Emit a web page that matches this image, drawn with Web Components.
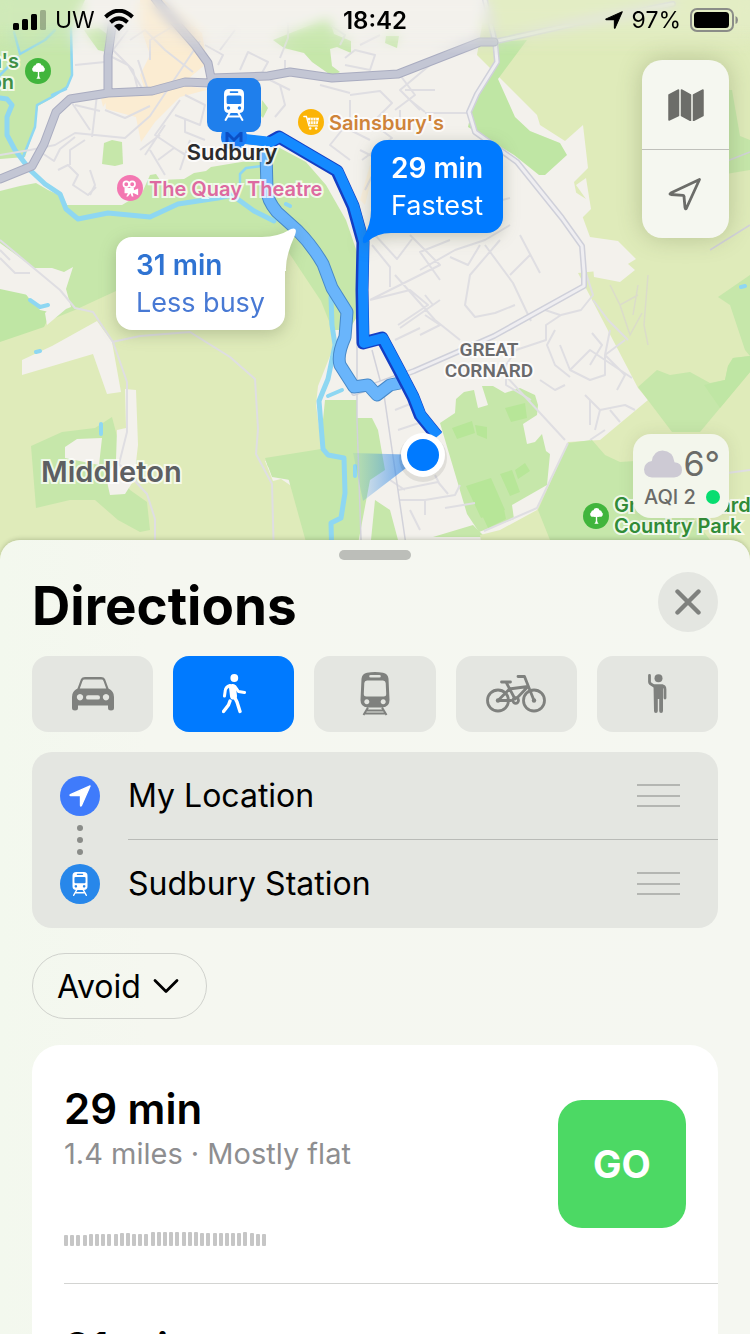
<!DOCTYPE html>
<html lang="en">
<head>
<meta charset="utf-8">
<meta name="viewport" content="width=device-width, initial-scale=1">
<title>Directions</title>
<style>
  :root {
    --blue: #007aff;
    --green: #4cd964;
    --grey: #7f817e;
    --sheet: #f5f7f0;
    --fill: #e4e6e1;
  }
  body { margin: 0; font-family: Inter, 'Liberation Sans', sans-serif; color: #000; }
</style>
</head>
<body>
<maps-app>
  <map-view slot="map">
    <map-label x="19" y="72" color="#3f8f45" anchor="end">n's<br>on</map-label>
    <map-poi x="38" y="71" icon="tree" color="#41b53c"></map-poi>
    <map-poi x="311" y="122" icon="cart" color="#fbb406"></map-poi>
    <map-label x="329" y="123" color="#cf8439">Sainsbury's</map-label>
    <map-poi x="130" y="188" icon="film" color="#f377b1"></map-poi>
    <map-label x="149" y="189" color="#dd6aa0">The Quay Theatre</map-label>
    <map-label x="232" y="152" color="#2b2b2d" size="22" anchor="middle">Sudbury</map-label>
    <map-label x="41" y="471" color="#5d5f62" size="29">Middleton</map-label>
    <map-label x="489" y="360" color="#6a6a6c" size="19" anchor="middle" face="Roboto">GREAT<br>CORNARD</map-label>
    <map-poi x="596" y="516" icon="tree" color="#41b53c"></map-poi>
    <map-label x="614" y="516" color="#318c38">Great Cornard<br>Country Park</map-label>
    <map-callout class="fast" tail="bottom" heading="29 min">Fastest</map-callout>
    <map-callout class="quiet" tail="top" heading="31 min">Less busy</map-callout>
  </map-view>
  <status-bar slot="status" carrier="UW" time="18:42" battery="97%"></status-bar>
  <map-controls slot="controls"></map-controls>
  <weather-chip slot="weather" temp="6°">AQI 2</weather-chip>
  <directions-sheet heading="Directions">
    <transport-tabs slot="modes"></transport-tabs>
    <stop-list slot="stops">
      <stop-row icon="arrow" color="#3f7bfb">My Location</stop-row>
      <stop-row icon="train" color="#2787ea">Sudbury Station</stop-row>
    </stop-list>
    <menu-pill slot="options">Avoid</menu-pill>
    <route-row heading="29 min" bars="222233333443335555555544444445433">1.4 miles · Mostly flat</route-row>
    <route-row heading="31 min" bars="222233334444333333333444333333222">1.5 miles · Mostly flat</route-row>
  </directions-sheet>
</maps-app>

<script>
const ICONS = {
  train: ['0 0 24 32', `<path fill="currentColor" fill-rule="evenodd" d="M7 0h10q5 0 5 5v14q0 5-5 5H7q-5 0-5-5V5q0-5 5-5zM8.500 2.200q-.8 0-.8.9t.8.9h7q.8 0 .8-.9t-.8-.9zM6 6.500q-1.400 0-1.400 1.500v5.500q0 1.500 1.400 1.500h12q1.400 0 1.400-1.500V8q0-1.500-1.400-1.500zM6.500 17.300a1.700 1.700 0 1 0 .01 0zM17.500 17.300a1.700 1.700 0 1 0 .01 0z"/><path d="M7.500 24 3.600 31M16.500 24l3.900 7M6 27.500h12" fill="none" stroke="currentColor" stroke-width="2" stroke-linecap="round"/>`],
  tram: ['0 0 30 44', `<path fill="currentColor" fill-rule="evenodd" d="M7 .8Q15-.8 23 .8q5 1 5.500 6L29.500 28q0 7-7 7.500H7.500q-7-.5-7-7.500L1.500 6.800q.5-5 5.500-6zM10.500 3q-1.300 0-1.300 1.200t1.300 1.200h9q1.300 0 1.300-1.200T19.500 3zM7 8.500q-2.500 0-2.700 2.500L3.800 22q0 2.500 2.500 2.500h17.400q2.500 0 2.500-2.500l-.5-11Q25.500 8.500 23 8.500zM6.800 27.200a2.500 2.500 0 1 0 .01 0zM23.200 27.200a2.500 2.500 0 1 0 .01 0z"/><path d="M8 35.500 3.500 43M22 35.500l4.500 7.500M6 38.500h18M4.500 41.500h21" fill="none" stroke="currentColor" stroke-width="2"/>`],
  car: ['0 0 42 34', `<path fill="currentColor" fill-rule="evenodd" d="M9 2Q10 0 13 0h16q3 0 4 2l3.500 9.500Q42 14 42 20v11q0 2.500-3 2.500t-3-2.500v-2.500H6V31q0 2.500-3 2.500T0 31V20q0-6 5.500-8.500zM12.500 2.600q-1.500 0-2 1.400L7.800 11.500h26.400L31.500 4q-.5-1.400-2-1.400zM8 17a3.200 3.200 0 1 0 .01 0zM34 17a3.200 3.200 0 1 0 .01 0zM16 18.200q-2 0-2 2.200t2 2.200h10q2 0 2-2.200t-2-2.200z"/>`],
  walk: ['0 0 24 40', `<circle cx="12.300" cy="4" r="3.900" fill="currentColor"/><g fill="none" stroke="currentColor" stroke-linecap="round" stroke-linejoin="round"><path d="M10.500 13.500 11.500 22" stroke-width="7"/><path d="M8 11.500Q3.500 13 3.200 17L2.500 22M13 12.500l3.500 5 6 1" stroke-width="3"/><path d="M12 22l3 6 3 9.500M8 27l-1.500 4-5 6.500" stroke-width="3.400"/></g>`],
  bike: ['0 0 60 38', `<g fill="none" stroke="currentColor" stroke-width="2.800" stroke-linecap="round" stroke-linejoin="round"><circle cx="12" cy="25.500" r="10.500"/><circle cx="48" cy="25.500" r="10.500"/><path d="M15.500 7h9M20 7l9 17M32 1.500h6.500L48 25.500M23 14l19-2.500L31 23M12 25.500h13M12 25.500 23.500 14"/><circle cx="29.700" cy="25.500" r="2.800"/></g><circle cx="12" cy="25.500" r="2.200" fill="currentColor"/><circle cx="48" cy="25.500" r="2.200" fill="currentColor"/>`],
  hail: ['0 0 19 40', `<circle cx="10.500" cy="4.300" r="4" fill="currentColor"/><path d="M1.500 1.500v6.500q0 1 1 1.800L6 12h8q3 0 3 3.500V24" fill="none" stroke="currentColor" stroke-width="2.800" stroke-linecap="round" stroke-linejoin="round"/><path d="M5.500 10.600H15V37q0 2-1.900 2T11.200 37V25h-1.400v12q0 2-1.900 2T6 37z" fill="currentColor"/>`],
  map: ['0 0 36 32', `<path fill="currentColor" stroke="currentColor" stroke-width="1.500" stroke-linejoin="round" d="M1 6l9.500-5v25.500L1 31zM13.500 1l9 5v25.500l-9-5zM25.500 6 35 1v25.500l-9.500 5z"/>`],
  compass: ['0 0 36 34', `<path fill="none" stroke="currentColor" stroke-width="2.800" stroke-linejoin="round" d="M31.500 2.500 18.500 31q-1 2-1.500-.5L16 19.500q0-1-1-1.200L3 17.500q-2-.4-.2-1.400z"/>`],
  arrow: ['0 0 24 24', `<path fill="currentColor" stroke="currentColor" stroke-width="1.400" stroke-linejoin="round" d="M23 1 13.500 22.500q-.8 1-1-.3V12.400q0-.9-.9-.9H1.800q-1.300-.2-.3-1z"/>`],
  tree: ['0 0 16 20', `<path fill="currentColor" d="M8 0q3 0 3.600 2.500Q14 2.500 14.300 5 16.500 6.500 15 9q-1.500 2-4 1.200-1.400.8-2.200.2V15q0 2 1.700 3.500h-5Q7.200 17 7.200 15v-4.600q-.8.6-2.200-.2-2.500.8-4-1.200Q-.5 6.500 1.700 5 2 2.500 4.400 2.500 5 0 8 0z"/>`],
  cart: ['0 0 20 20', `<path d="M1 3h3l3 11h10" fill="none" stroke="currentColor" stroke-width="1.600" stroke-linecap="round"/><path d="M5 4.500h14l-1.800 7.500H7z" fill="currentColor"/><path d="M9 5v7M12 5v7M15 5v7M6 8h12" stroke="#fbb406" stroke-width=".8"/><circle cx="8.500" cy="17" r="1.500" fill="currentColor"/><circle cx="15.500" cy="17" r="1.500" fill="currentColor"/>`],
  film: ['0 0 20 20', `<circle cx="5" cy="5" r="3.300" fill="none" stroke="currentColor" stroke-width="2"/><circle cx="12" cy="5" r="3.300" fill="none" stroke="currentColor" stroke-width="2"/><path fill="currentColor" d="M3 9.500h11V12l5-2v8l-5-2.500h-1.500l1 4h-2l-1.500-4-3 4H5l2-4H3z"/>`],
  close: ['0 0 26 26', `<path d="M2.500 2.500l21 21M23.500 2.500l-21 21" stroke="currentColor" stroke-width="4.400" stroke-linecap="round"/>`],
  chevron: ['0 0 26 16', `<path d="M2 2.500l11 11 11-11" fill="none" stroke="currentColor" stroke-width="2.800" stroke-linecap="round" stroke-linejoin="round"/>`],
  cloud: ['0 0 38 28', `<path fill="currentColor" d="M8 27.500h22q8-.5 8-7.500t-7.500-7.800Q29 1 18.500.5 9.500.8 7.800 11 .2 12.500 0 19.500q.3 7.500 8 8z"/>`],
  wifi: ['0 0 30 22', `<g fill="none" stroke="currentColor" stroke-width="4"><path d="M1.500 8Q15-4.500 28.500 8"/><path d="M6.500 13.200Q15 5.500 23.500 13.200"/></g><path fill="currentColor" d="M10 17q5-4.500 10 0l-5 5z"/>`]
};

const icon = (name, width, height) =>
  `<svg class="icon" viewBox="${ICONS[name][0]}" width="${width}" height="${height}" aria-hidden="true">${ICONS[name][1]}</svg>`;

// Small base class: render() returns the markup of the shadow root.
class BaseElement extends HTMLElement {
  connectedCallback() {
    if (this.shadowRoot) return;
    const root = this.attachShadow({ mode: 'open' });
    const template = document.createElement('template');
    template.innerHTML = this.render();
    root.appendChild(template.content.cloneNode(true));
  }
}

customElements.define('maps-app', class extends BaseElement {
  render() {
    return `
<style>
  :host { display: flex; flex-direction: column; height: 100vh; overflow: hidden; background: var(--sheet); }
  .stage { position: relative; flex: 0 0 560px; }
  .haze { position: absolute; inset: 0 0 auto; height: 56px; backdrop-filter: blur(6px); background: rgba(245,245,240,0.2); -webkit-mask-image: linear-gradient(#000 40%, transparent); mask-image: linear-gradient(#000 40%, transparent); }
  .status { position: absolute; inset: 0 0 auto; }
  .controls { position: absolute; top: 60px; right: 21px; }
  .weather { position: absolute; right: 21px; bottom: 42px; }
  .panel { position: relative; flex: 1 1 auto; min-height: 0; margin-top: -20px; display: flex; }
</style>
<div class="stage">
  <slot name="map"></slot>
  <div class="haze"></div>
  <div class="status"><slot name="status"></slot></div>
  <div class="controls"><slot name="controls"></slot></div>
  <div class="weather"><slot name="weather"></slot></div>
</div>
<div class="panel"><slot></slot></div>`;
  }
});

customElements.define('status-bar', class extends BaseElement {
  render() {
    return `
<style>
  :host { display: grid; grid-template-columns: 1fr auto 1fr; align-items: center; height: 40px; padding: 0 12px; font-size: 23px; }
  .side { display: flex; align-items: center; gap: 9px; }
  .right { justify-content: flex-end; }
  .time { font-size: 24px; font-weight: 600; }
  svg { display: block; }
</style>
<div class="side">
  <svg width="34" height="20" viewBox="0 0 34 20" aria-hidden="true">
    <rect x="1" y="13" width="6" height="7" rx="1.500"/><rect x="10" y="9" width="6" height="11" rx="1.500"/>
    <rect x="19" y="4" width="6" height="16" rx="1.500"/><rect x="28" y="0" width="6" height="20" rx="1.500" opacity=".25"/>
  </svg>
  <span>${this.getAttribute('carrier')}</span>
  ${icon('wifi', 30, 22)}
</div>
<div class="time">${this.getAttribute('time')}</div>
<div class="side right">
  ${icon('arrow', 18, 18)}
  <span>${this.getAttribute('battery')}</span>
  <svg width="48" height="24" viewBox="0 0 48 24" aria-hidden="true">
    <rect x="1" y="1" width="42" height="22" rx="6" fill="none" stroke="#8b8d88" stroke-width="2"/>
    <rect x="4" y="4" width="35" height="16" rx="3.500"/><path d="M45.500 8q2.500 1 2.500 4t-2.500 4z" fill="#8b8d88"/>
  </svg>
</div>`;
  }
});

customElements.define('map-view', class extends BaseElement {
  render() {
    const lane = 'M495 40l2 22-20 32-8 18 6 20 42 30 45 56 20 28 2 26 0 14-90 50-80 35-60 22M495 42l-10-42M493 42l90-20 90-18';
    const main = 'M0 179l32-13 12-22 12-32 14-13 38-6 44-2 33-9 25 1 2-5 56-2 22-4 42 6 66-4 82-32h14M108 92l0-36 4-30M145-15l15 20 35 40 13 18 4 20';
    const slow = 'M266 152l1 38q0 10 10 22l20 18q15 15 26 34l9 24 15 24-2 25q-8 18-5 28l14 22 14-2 9 10 13-10 10-2';
    const fast = 'l9-5 58 34 16 35 10 36-1 48 1 53 19-5 17 32 14 27 7 18 17 21';
    return `
<style>
  :host { display: block; position: relative; height: 560px; overflow: hidden; background: #f3f1ec; }
  .base { display: block; width: 100%; height: 100%; }
  .pin { position: absolute; left: calc(100% * 234 / 750); top: 105px; width: 54px; height: 54px; margin: -27px 0 0 -27px; border-radius: 10px; background: #1f7fec; color: #fff; display: flex; align-items: center; justify-content: center; }
  ::slotted(.fast) { left: calc(100% * 371 / 750); top: 140px; --back: var(--blue); --ink: #fff; --sub: #fff; }
  ::slotted(.quiet) { left: calc(100% * 116 / 750); top: 237px; --back: #fff; --ink: #2f73d2; --sub: #4879d4; }
</style>
<svg class="base" viewBox="0 0 750 560" preserveAspectRatio="xMidYMid slice" aria-hidden="true">
  <defs>
    <linearGradient id="beam" x1="1" y1="0" x2="0" y2="0"><stop offset="0" stop-color="#1778ee" stop-opacity=".8"/><stop offset="1" stop-color="#3a92dd" stop-opacity=".08"/></linearGradient>
  </defs>
  <!-- town centre -->
  <g fill="#fbecd2">
    <path d="M140 0h24l38 33 5 30-24 20-75 16-5 8-3-13 45-4-5-15 10-20-10-30z"/>
    <path d="M105 98l80-12 25 3-30 8-25 25-14 20-5-25-30-8z"/>
    <path d="M375 165l-10 40-5-5 10-35z" opacity=".6"/>
  </g>
  <!-- parks and woods -->
  <g fill="#c6e7aa">
    <path d="M0 0h85L72 28l-1 47-4 13-15 10-14 8-4 24-9 27-25 2z"/>
    <path d="M0 191l20-5 16-3 12 7 15 7 4 8 55 0 20-12 8-18 6-1 4 6 24-1 10-6 12-2 5-4 24-4 25-4 18-12 28 15 20 23 20 35 12 35 6 50-15 25H100L0 345V287l20 2 8 12 13 9 10-3-1-12-18-15-32-24z"/>
    <path d="M84 30l15-2 8 6-1 18-8-2-10-14z"/>
    <path d="M104 143l8-3 10 2 1 22-8 2-13-2z"/>
    <path d="M273 40l40-16 16-6 5 16 17 7 0 12-14-6-7 2 2 17 8 6-8 4-20-14-8-9-20-5z"/>
    <path d="M262 100l6 8-5 10-2-2zM386 36l13 0-2 12-12-5z"/>
    <path d="M325 400h32v18h15l6 12 7 40-15 10-15 80h-55l-10-80-18-3-7-19 55-9z"/>
    <path d="M375 500l15 10 8 30 0 10h-28zM385 537h100l-12-12-40 12z"/>
    <path d="M440 423l15-10 1-14 8-7 10-2 4 18 10-3-6-19 11 0 12 7 15-5 15 7 3 10-1 10-14 9 4 20 8-2 7-8 4 17 4 3-3 31-35 20 2 14-35 13-12-18z"/>
  </g>
  <!-- farmland -->
  <g fill="#dfebba">
    <path d="M0 340l45-18 30-12 15-7 26-12 60-50 30 0 40 15 35-15 40 60 8 20 5 25-16 40-2 19 6 45-57 11 8 20 8-2 18 12 12 69H0z"/>
    <path d="M550 0h200v560H484l-4-25 20-5 37-20 31-68 32-2 48-40-10-12-60-115 20-2 25-4 13-8-18-18-28-4-11-30-5-25 14-14-5-43-18 16-25-16-3-10-60-60 10-60-12-2z"/>
  </g>
  <g fill="#c6e7aa">
    <path d="M31 446l31-14 33-4 17-11 6 23 2 35 10 15 17 12 3 28-10 2-22-12-23-20-25 0-34 8z"/>
    <path d="M568 443l24-3 13 15 15 7 30-2 60 80 0 20H558l-20-50zM638 387l19-17 13 5 20-3 20 11 15-3 3-14 5-8 17-2v16l-30 36-20 24H672z"/>
    <path d="M750 275l-32 22 12 8 15 45 5 6zM716 90l16 0 8 46 10 4v30l-30 5z"/>
    <path d="M265 458l56-9 24 9-1 60-14 2 1 40h-20l-25-90-18-3z"/>
  </g>
  <g fill="#bfe6a4">
    <path d="M498 42l29-2-29 39 17 38 15 14 30 12 7 12-22 20-6 0-25-20-46-28 7-32 24-33z"/>
    <path d="M0 287l22 2 9 12 13 8 6 6-6 12-44 15zM704 385l21-5 3-14 5-8 17-2v16l-30 36z"/>
  </g>
  <g fill="#b7e698">
    <path d="M452 428l20-7 3 12-18 6zM505 408l20-5 2 15-16 4zM475 425l12 2 0 12-10-4zM466 486l25-8 14 32-24 8zM500 474l12-4 8 22-10 4zM515 470l10-7 5 8-12 8zM482 515l22-6 2 10-18 9z"/>
  </g>
  <!-- built-up patches in the fields -->
  <g fill="#f3f1ec">
    <path d="M0 243l34 25 8 0 10 0 12 4 9-5-7 22 5 18-5 2-19 16-2-12 9-8-5 7-9-2-12-15-28-6z"/>
    <path d="M22 360l30-14 45-25 15 21 9 50-14 2-14-40-71 21zM125 389l11 1 2 55-4 35-9 14-15 1-4-18 10-17 1-30 9-2zM65 447l12-8 25-1-3 27-34-7z"/>
    <path d="M550 176l36 23-10-14 10-7 5 31-14 14zM591 247l20 3 9 7 15 13-15 12-26-5z"/>
  </g>
  <g stroke="#dbdcca" stroke-width="1.500" fill="none"><path d="M610 285l10 20 18-10M620 305l10 30 12-22M638 285l-5 30M648 275l-4 50 4 20"/></g>
  <!-- water -->
  <g fill="none" stroke="#8ed7f2" stroke-linejoin="round" stroke-linecap="round">
    <path d="M0 98l7 1 5 6-5 12 0 18 8 15 15 20 15 14 15 10 6 15 12 10 30-6 42 4 28-13 40-6 14-3 22 16 20 10" stroke-width="5"/>
    <path d="M71 28l1 47-5 12-15 10-15 8-2 22-12 30M14 32l6 22 25-14 10-10M0 75l18-18M240 188l0-14 6-6 16-2M52 95l14-6" stroke-width="2.500"/>
    <path d="M331 297l1 28 3 20-7 34-9 22 4 48 5 6 16 3 1 35-4 25-10 5 1 37" stroke-width="5"/>
    <path d="M328 396l14-6M355 466l0 10" stroke-width="4"/>
    <path d="M30 300l10 7 8-2M36 352l4-1M101 424l0 10M286 204l4 2M741 287l4-1" stroke-width="4"/>
  </g>
  <!-- streets -->
  <g fill="none" stroke="#dfdee2" stroke-width="2" stroke-linejoin="round">
    <path d="M0 155l30-5 25-5 20-12 50 5 25-22 20-30 30-45M128 30l-15 20 20 20 5 20M130 40l15-10 20 20 28 22M170 28l-20 12 0 20M75 65l30-3M70 100l20 30M97 95l-5 42M105 110l20 8 25-12M75 105l25 6M138 60l10 30M108 55l20 10 15 25"/>
    <path d="M42 153l12 8 6-12 15-12M58 170l10-5 10 10-5 10 15 10 8-8M70 165l0-15 15-10M90 170l5 15-5 10M140 150l20-15M150 150l15 25M165 125l-20 30M180 100l-25 35 30 20M175 115l25 10 5-20-20-10M185 120l0 12 20 8M158 160l16-12 18 10M190 140l-10 30"/>
    <path d="M205 45l18 10-5 10M220 50l15-20M240 70l8-18 20 10-10 18M280 58l8-20 0-15M285 60l0 14M345 58l10-8 20 5-5 15-25-5M330 25l15 10-5 10M360 45l20-10"/>
    <path d="M280 85l5 20-10 12M270 80l20 10M320 85l30 8M350 100l0 30 20 10M350 95l30-4 12 12-20 20 20 15-30 22M400 75l15 20-20 15M430 65l-30 25 20 20M405 90l30 0M350 160l-20-15 20-25M410 100l15 12M360 150l20 10-15 30M400 110l0 18M425 113l42 0"/>
    <path d="M510 198l-60 16-25 0-12 12M450 240l-30 12 20 28M480 245l-12 20-18-8M372 245l18 22 0 20M375 235l22 24 15-20M410 235l30 30-50 25-20 10M420 270l35-20 30-10 25-15M395 275l40 45 25 20M370 300l40-10 18 15-30 20M440 300l-40 28M425 295l8 10M395 340l25-12M420 335l20-10-15-10M500 240l-30 35 -5 30 10 12 20-4 20-8M485 245l28 38 18 38M520 235l20 38M530 255l-20 20"/>
    <path d="M585 270l8 25-12 15-20 5-15 10 0 15-30 10-10 15 0 20 25 15M593 300l15 20 20 20M560 315l-15-5M555 330l-8 15 8 20 15 12M560 345l10 25 20 10 15-5 0-20 20-15M570 370l20-20 30 20 12 8M590 365l12-20-10-12M610 330l-5 25 20 20-8 15M540 380l15 10 10-5"/>
    <path d="M585 395l15 15 25-5 10 5M600 410l-5 20M590 400l0 25M605 430l-15 10M610 410l10 12M565 440l-60-65-15-8M395 410l25-10M398 430l30-10M405 445l20-8"/>
    <path d="M398 490l40-8 10 12M400 500l25 0 0 15M425 500l30-5 5-10M410 510l10 20M390 480l15 10M440 485l-5-10M445 508l30-5"/>
    <path d="M0 240l60 50 15 18 18 4 20 30 14 40 0 50-8 32 28 30 8 25 0 41M112 342l28-6 50-4 40 25 25 22 3 50-2 25 16 30 2 75M0 258l15 15 15 0M0 250l10 10M484 531l53-23 31-65M750 470l-60 8"/>
  </g>
  <g fill="none" stroke="#d2d2da" stroke-width="1.500"><path d="M357 290v130l4 120M372 350l12 45 22 150M750 152l-38 15M710 250l40-25"/></g>
  <g fill="none" stroke-linejoin="round" stroke-linecap="round">
    <path d="${lane}" stroke="#cfd0da" stroke-width="6"/>
    <path d="${lane}" stroke="#efeef1" stroke-width="3"/>
    <path d="${main}" stroke="#a9acc0" stroke-width="9"/>
    <path d="${main}" stroke="#c3c6d4" stroke-width="7"/>
  </g>
  <!-- slower route under the fastest one -->
  <g fill="none" stroke-linejoin="round">
    <path d="${slow}" stroke="#4889c8" stroke-width="13"/>
    <path d="${slow}" stroke="#6ab5fb" stroke-width="11"/>
    <path d="M234 138l37 4 8-6" stroke="#1360cf" stroke-width="9"/>
    <path d="M270 142${fast}" stroke="#143fc4" stroke-width="13"/>
    <path d="M236 138l35 4${fast}" stroke="#148aff" stroke-width="10"/>
  </g>
  <circle cx="234" cy="137" r="13" fill="#1a7df5"/>
  <path d="M227 142v-9l7 7 7-7v9" fill="none" stroke="#0c4fc4" stroke-width="3"/>
  <path d="M423 455l-70-2 10 48z" fill="url(#beam)"/>
  <circle cx="423" cy="458" r="24" fill="#000" opacity=".08"/>
  <circle cx="423" cy="455" r="22" fill="#fff"/>
  <circle cx="423" cy="455" r="16" fill="#007aff"/>
</svg>
<div class="pin">${icon('train', 24, 32)}</div>
<slot></slot>`;
  }
});

customElements.define('map-label', class extends BaseElement {
  render() {
    const shift = { start: '0', middle: '-50%', end: '-100%' }[this.getAttribute('anchor') || 'start'];
    const size = this.getAttribute('size') || 20;
    const align = this.getAttribute('anchor') === 'middle' ? 'center' : 'left';
    return `
<style>
  :host { display: block; position: absolute; left: calc(100% * ${this.getAttribute('x')} / 750); top: ${this.getAttribute('y')}px; transform: translate(${shift}, -50%); white-space: nowrap; text-align: ${align}; color: ${this.getAttribute('color')}; font: 600 ${size}px/21px ${this.getAttribute('face') || 'Inter'}, sans-serif; -webkit-text-stroke: 4px rgba(255,255,255,0.75); paint-order: stroke fill; }
</style>
<slot></slot>`;
  }
});

customElements.define('map-poi', class extends BaseElement {
  render() {
    return `
<style>
  :host { display: flex; align-items: center; justify-content: center; position: absolute; left: calc(100% * ${this.getAttribute('x')} / 750); top: ${this.getAttribute('y')}px; width: 26px; height: 26px; margin: -13px 0 0 -13px; border-radius: 50%; background: ${this.getAttribute('color')}; color: #fff; }
</style>
${icon(this.getAttribute('icon'), 17, 17)}`;
  }
});

customElements.define('map-callout', class extends BaseElement {
  render() {
    const tail = this.getAttribute('tail') === 'bottom'
      ? '<path d="M0 65Q1 84-8 98-9 106-4 102 6 93 20 93V65z"/>'
      : '<path d="M170 34Q169 20 179 -2 182-10 175-8 162 0 146 0V34z"/>';
    return `
<style>
  :host { display: block; position: absolute; box-sizing: border-box; padding: 10px 20px 9px; border-radius: 16px; background: var(--back); filter: drop-shadow(0 4px 8px rgba(60,70,40,0.25)); font-size: 27px; line-height: 37px; white-space: nowrap; }
  svg { position: absolute; left: 0; top: 0; overflow: visible; fill: var(--back); }
  strong { display: block; position: relative; font-size: 28px; font-weight: 600; color: var(--ink); }
  span { position: relative; color: var(--sub); }
</style>
<svg width="1" height="1" aria-hidden="true">${tail}</svg>
<strong>${this.getAttribute('heading')}</strong>
<span><slot></slot></span>`;
  }
});

customElements.define('map-controls', class extends BaseElement {
  render() {
    return `
<style>
  :host { display: flex; flex-direction: column; width: 87px; border-radius: 20px; overflow: hidden; background: #f5f7f0; box-shadow: 0 0 24px rgba(80,90,50,0.28); }
  button { appearance: none; height: 89px; padding: 0; border: 0; background: transparent; color: #6c6d69; display: flex; align-items: center; justify-content: center; }
  button + button { border-top: 1px solid #bfc0bb; }
</style>
<button type="button" aria-label="Map style">${icon('map', 36, 32)}</button>
<button type="button" aria-label="Locate me">${icon('compass', 36, 34)}</button>`;
  }
});

customElements.define('weather-chip', class extends BaseElement {
  render() {
    return `
<style>
  :host { display: flex; flex-direction: column; justify-content: center; box-sizing: border-box; width: 96px; height: 84px; padding: 4px 9px 0 11px; border-radius: 18px; background: #f3f6ec; color: #6a6b68; box-shadow: 0 0 16px rgba(80,90,50,0.12); }
  div { display: flex; align-items: center; justify-content: space-between; }
  .temp { font-size: 34px; line-height: 38px; }
  .aqi { font-size: 20px; line-height: 28px; font-weight: 500; }
  .temp svg { color: #cdcad4; }
  i { width: 14px; height: 14px; border-radius: 50%; background: #07dd70; }
</style>
<div class="temp">${icon('cloud', 38, 28)}<span>${this.getAttribute('temp')}</span></div>
<div class="aqi"><span><slot></slot></span><i></i></div>`;
  }
});

customElements.define('directions-sheet', class extends BaseElement {
  render() {
    return `
<style>
  :host { display: flex; flex-direction: column; flex: 1; box-sizing: border-box; padding: 10px 32px 0; border-radius: 20px 20px 0 0; background: linear-gradient(90deg, #f3f8ee, #f5f7f0 20%, #f5f7f1); box-shadow: 0 -1px 4px rgba(60,70,40,0.25); overflow: hidden; }
  .grip { flex: none; align-self: center; width: 72px; height: 10px; border-radius: 5px; background: #bcbeb9; }
  header { flex: none; display: flex; align-items: center; justify-content: space-between; margin-top: 12px; height: 60px; }
  h1 { margin: 0; padding-top: 8px; font-size: 53px; line-height: 60px; font-weight: 700; }
  .close { appearance: none; width: 60px; height: 60px; border: 0; padding: 0; border-radius: 50%; background: var(--fill); color: var(--grey); display: flex; align-items: center; justify-content: center; }
  .modes { flex: none; margin-top: 24px; }
  .stops { flex: none; margin-top: 20px; }
  .options { flex: none; display: flex; margin-top: 25px; }
  .routes { flex: none; margin-top: 26px; border-radius: 28px 28px 0 0; background: #fff; }
</style>
<div class="grip"></div>
<header>
  <h1>${this.getAttribute('heading')}</h1>
  <button class="close" type="button" aria-label="Close">${icon('close', 26, 26)}</button>
</header>
<div class="modes"><slot name="modes"></slot></div>
<div class="stops"><slot name="stops"></slot></div>
<div class="options"><slot name="options"></slot></div>
<div class="routes"><slot></slot></div>`;
  }
});

customElements.define('transport-tabs', class extends BaseElement {
  render() {
    const modes = [['Drive', 'car', 42, 34], ['Walk', 'walk', 24, 40], ['Transit', 'tram', 30, 44], ['Cycle', 'bike', 60, 38], ['Ride share', 'hail', 19, 40]];
    return `
<style>
  :host { display: grid; grid-template-columns: repeat(5, 1fr); gap: 20px; }
  button { appearance: none; height: 76px; padding: 0; border: 0; border-radius: 16px; background: var(--fill); color: var(--grey); display: flex; align-items: center; justify-content: center; }
  button[aria-pressed="true"] { background: var(--blue); color: #fff; }
</style>
${modes.map(([label, name, w, h]) => `<button type="button" aria-label="${label}" aria-pressed="${name === 'walk'}">${icon(name, w, h)}</button>`).join('')}`;
  }

  connectedCallback() {
    super.connectedCallback();
    const buttons = [...this.shadowRoot.querySelectorAll('button')];
    buttons.forEach((button) => {
      button.onclick = () => buttons.forEach((b) => b.setAttribute('aria-pressed', String(b === button)));
    });
  }
});

customElements.define('stop-list', class extends BaseElement {
  render() {
    return `
<style>
  :host { display: block; position: relative; border-radius: 20px; background: var(--fill); overflow: hidden; }
  .dots { position: absolute; left: 45px; top: 73px; width: 6px; height: 30px; display: flex; flex-direction: column; justify-content: space-between; }
  .dots i { width: 6px; height: 6px; border-radius: 50%; background: #8a8c88; }
  ::slotted(:not(:last-child)) { --line: #b9bbb7; }
</style>
<slot></slot>
<div class="dots"><i></i><i></i><i></i></div>`;
  }
});

customElements.define('stop-row', class extends BaseElement {
  render() {
    const name = this.getAttribute('icon');
    return `
<style>
  :host { display: flex; align-items: center; height: 88px; padding-left: 28px; }
  .badge { flex: none; width: 40px; height: 40px; border-radius: 50%; background: ${this.getAttribute('color')}; color: #fff; display: flex; align-items: center; justify-content: center; }
  .body { flex: 1; box-sizing: border-box; height: 88px; margin-left: 28px; padding-right: 38px; display: flex; align-items: center; justify-content: space-between; border-bottom: 1px solid var(--line, transparent); font-size: 32px; }
  button { appearance: none; width: 43px; height: 23px; padding: 0; border: 0; background: none; display: flex; flex-direction: column; justify-content: space-between; }
  button i { width: 43px; height: 2px; background: #b4b6b2; }
</style>
<div class="badge">${icon(name, 22, name === 'train' ? 24 : 22)}</div>
<div class="body">
  <span><slot></slot></span>
  <button type="button" aria-label="Reorder"><i></i><i></i><i></i></button>
</div>`;
  }
});

customElements.define('menu-pill', class extends BaseElement {
  render() {
    return `
<style>
  :host { display: block; }
  button { appearance: none; box-sizing: border-box; height: 66px; padding: 0 27px 0 24px; border: 1px solid #d0d2cd; border-radius: 33px; background: transparent; color: #000; font: inherit; font-size: 32px; display: flex; align-items: center; gap: 12px; }
</style>
<button type="button" aria-haspopup="menu"><slot></slot>${icon('chevron', 26, 16)}</button>`;
  }
});

customElements.define('route-row', class extends BaseElement {
  render() {
    const bars = [...this.getAttribute('bars')].map((n) => `<i style="height:${9 + Number(n)}px"></i>`).join('');
    return `
<style>
  :host { display: flex; align-items: center; margin-left: 32px; padding-right: 32px; height: 238px; border-bottom: 1px solid #d3d4d2; }
  .info { flex: 1; padding-top: 2px; }
  h2 { margin: 0; font-size: 42px; line-height: 50px; font-weight: 600; }
  p { margin: 0; font-size: 29px; line-height: 40px; color: #8e8e90; }
  .climb { display: flex; align-items: flex-end; justify-content: space-between; width: 202px; height: 14px; margin-top: 58px; }
  .climb i { width: 4px; border-radius: 1px; background: #c6c6c6; }
  button { appearance: none; width: 128px; height: 128px; border: 0; border-radius: 24px; background: var(--green); color: #fff; font: inherit; font-size: 38px; font-weight: 700; }
</style>
<div class="info">
  <h2>${this.getAttribute('heading')}</h2>
  <p><slot></slot></p>
  <div class="climb" aria-hidden="true">${bars}</div>
</div>
<button type="button">GO</button>`;
  }
});
</script>
</body>
</html>
